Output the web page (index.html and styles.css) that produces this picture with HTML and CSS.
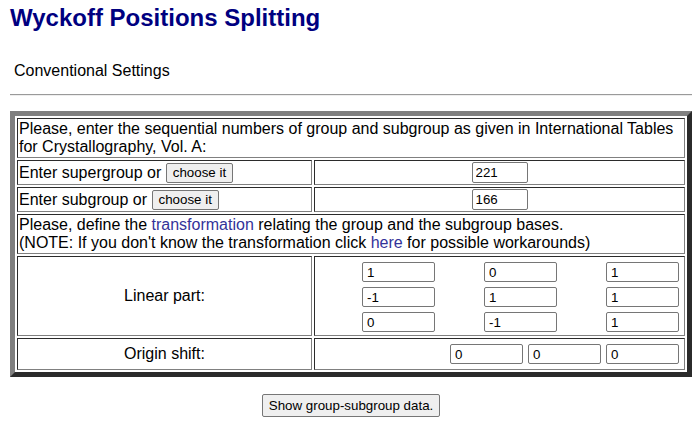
FILE: index.html
```html
<!DOCTYPE html>
<html>
<head>
<meta charset="utf-8">
<title>Wyckoff Positions Splitting</title>
<link rel="stylesheet" href="styles.css">
</head>
<body>
<h1 class="title">Wyckoff Positions Splitting</h1>
<p class="subtitle">Conventional Settings</p>
<hr class="rule">
<form class="form">
<table class="main">
  <tr>
    <td colspan="2" class="cell">Please, enter the sequential numbers of group and subgroup as given in International Tables for Crystallography, Vol. A:</td>
  </tr>
  <tr>
    <td class="cell lbl">Enter supergroup or <button type="button" class="btn">choose it</button></td>
    <td class="cell center"><input class="num" type="text" value="221"></td>
  </tr>
  <tr>
    <td class="cell lbl">Enter subgroup or <button type="button" class="btn">choose it</button></td>
    <td class="cell center"><input class="num" type="text" value="166"></td>
  </tr>
  <tr>
    <td colspan="2" class="cell">Please, define the <a class="link" href="#">transformation</a> relating the group and the subgroup bases.<br>(NOTE: If you don't know the transformation click <a class="link" href="#">here</a> for possible workarounds)</td>
  </tr>
  <tr>
    <td class="cell lbl center">Linear part:</td>
    <td class="cell">
      <div class="matrix">
        <input class="mat" type="text" value="1"><input class="mat" type="text" value="0"><input class="mat" type="text" value="1">
        <input class="mat" type="text" value="-1"><input class="mat" type="text" value="1"><input class="mat" type="text" value="1">
        <input class="mat" type="text" value="0"><input class="mat" type="text" value="-1"><input class="mat" type="text" value="1">
      </div>
    </td>
  </tr>
  <tr>
    <td class="cell lbl center">Origin shift:</td>
    <td class="cell">
      <div class="origin">
        <input class="mat" type="text" value="0"><input class="mat" type="text" value="0"><input class="mat" type="text" value="0">
      </div>
    </td>
  </tr>
</table>
<div class="submit-row"><button type="button" class="btn btn-big">Show group-subgroup data.</button></div>
</form>
</body>
</html>
```
FILE: styles.css
```css
html, body {
  background: #ffffff;
}
body {
  margin: 0;
  padding: 4px 6px 0 10px;
  font-family: "Liberation Sans", Arial, sans-serif;
  font-size: 16px;
  color: #000;
}
.title {
  margin: 0;
  font-size: 24px;
  line-height: 28px;
  font-weight: bold;
  color: #000080;
}
.subtitle {
  margin: 30px 0 0 0;
  padding-left: 4px;
  line-height: 18px;
}
.rule {
  margin: 14px 0 0 0;
  height: 0;
  border: 0;
  border-top: 1px solid #9a9a9a;
  border-bottom: 1px solid #eeeeee;
}
.form {
  margin: 15px 0 0 0;
}
.main {
  width: 682px;
  border-collapse: separate;
  border-spacing: 2px;
  border-style: solid;
  border-width: 5px;
  border-color: #808080 #2b2b2b #2b2b2b #808080;
}
.cell {
  padding: 1px;
  line-height: 18px;
  border-style: solid;
  border-width: 1px;
  border-color: #2b2b2b #808080 #808080 #2b2b2b;
  vertical-align: middle;
}
.lbl {
  width: 295px;
  box-sizing: border-box;
}
.center {
  text-align: center;
}
.link {
  color: #333399;
  text-decoration: none;
}
.btn {
  font-family: "Liberation Sans", Arial, sans-serif;
  font-size: 13.33px;
  height: 20px;
  padding: 0 6px;
  margin: 0;
  background: #efefef;
  border: 1px solid #767676;
  border-radius: 2px;
  color: #000;
  vertical-align: baseline;
}
.num {
  box-sizing: border-box;
  width: 56px;
  height: 21px;
  margin: 0;
  padding: 0 3px;
  font-family: "Liberation Sans", Arial, sans-serif;
  font-size: 13.33px;
  border: 1px solid #767676;
  border-radius: 2px;
  vertical-align: middle;
  color: #000;
}
.mat {
  box-sizing: border-box;
  width: 73px;
  height: 20px;
  margin: 0;
  padding: 0 4px;
  font-family: "Liberation Sans", Arial, sans-serif;
  font-size: 13.33px;
  border: 1px solid #767676;
  border-radius: 2px;
  color: #000;
}
.matrix {
  display: grid;
  grid-template-columns: 73px 73px 73px;
  column-gap: 49px;
  row-gap: 5px;
  padding: 4px 0 2px 46px;
}
.origin {
  display: flex;
  justify-content: flex-end;
  gap: 5px;
  padding: 4px 4px 4px 0;
}
.submit-row {
  width: 682px;
  text-align: center;
  margin-top: 17px;
}
.btn-big {
  height: 23px;
}
```
